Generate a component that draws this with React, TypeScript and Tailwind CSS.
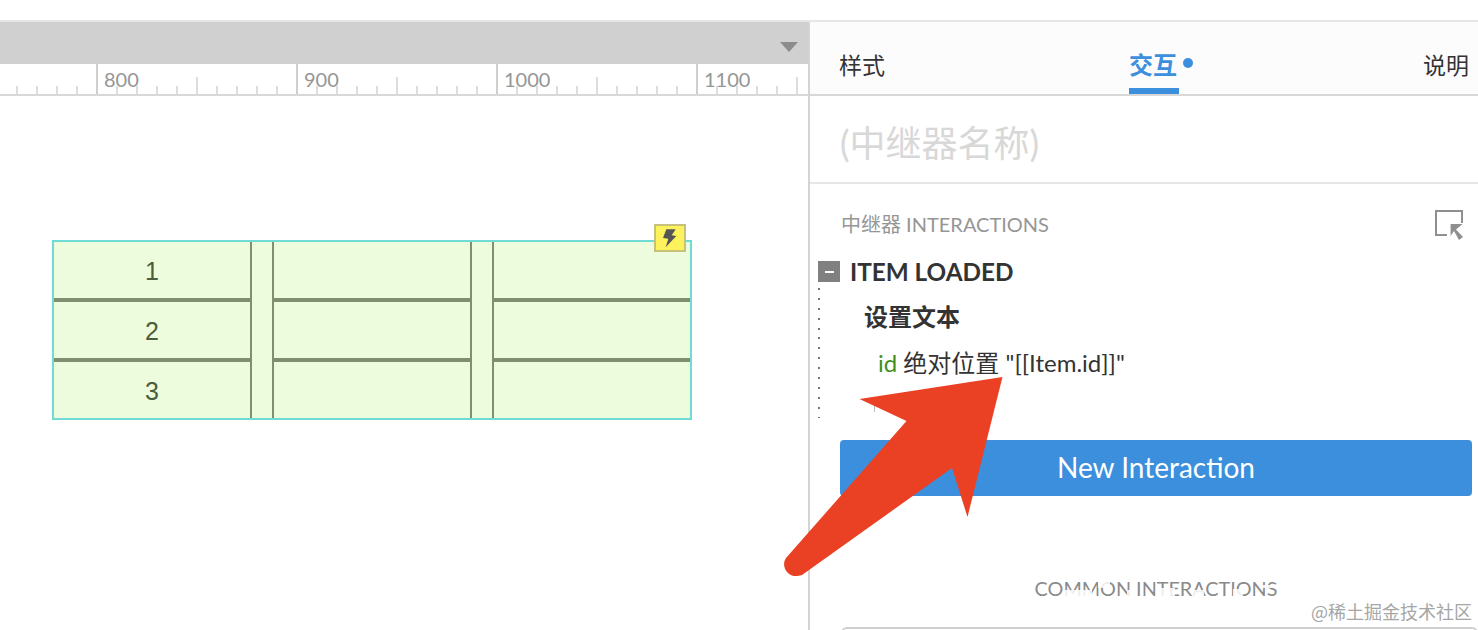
const latin = "font-['Lato','Noto_Sans_CJK_SC',sans-serif]";

const ticks = Array.from({ length: 40 }, (_, i) => 17 + i * 20);

// washed out patches over the "COMMON INTERACTIONS" caption
const patches = [
  "left-[1064px] top-[590px] h-[8px] w-[28px]",
  "left-[1098px] top-[580px] h-[8px] w-[12px]",
  "left-[1127px] top-[590px] h-[8px] w-[6px]",
  "left-[1161px] top-[588px] h-[10px] w-[14px]",
  "left-[1192px] top-[590px] h-[8px] w-[12px]",
  "left-[1233px] top-[589px] h-[9px] w-[10px]",
  "left-[1262px] top-[585px] h-[3px] w-[16px]",
];

function Ruler() {
  return (
    <div className="relative h-[32px] border-b-2 border-[#d8d8d8] bg-white">
      <svg className="absolute left-0 top-0" width="808" height="30" viewBox="0 0 808 30">
        {ticks.map((x) => {
          const major = (x - 97) % 200 === 0;
          const mid = (x - 197) % 200 === 0;
          return (
            <line key={x} x1={x} x2={x} y1={major ? 0 : mid ? 13 : 22} y2={30} stroke="#cfcfcf" strokeWidth={major ? 2 : 1.4} />
          );
        })}
      </svg>
      <div className="relative flex pl-[97px] pt-[2px]">
        {["800", "900", "1000", "1100"].map((n) => (
          <span key={n} className="w-[200px] shrink-0 pl-[7px] text-[20px] leading-[26px] text-[#969696]">
            {n}
          </span>
        ))}
      </div>
    </div>
  );
}

function Cells({ labels, className }: { labels?: string[]; className: string }) {
  const rows = labels ?? ["", "", ""];
  return (
    <div className={className}>
      {rows.map((t, i) => (
        <div
          key={i}
          className={`box-content flex h-[56px] items-center justify-center font-['Liberation_Sans',sans-serif] text-[25px] text-[#4b5d3d] ${i < 2 ? "border-b-4 border-[#7f8f6f]" : ""}`}
        >
          <span className="pt-[4px]">{t}</span>
        </div>
      ))}
    </div>
  );
}

function RepeaterTable() {
  return (
    <div className="relative flex h-[180px] w-[640px] border-2 border-[#70dad6] bg-[#ecfcdc]">
      <Cells labels={["1", "2", "3"]} className="w-[198px] border-r-2 border-[#7f8f6f]" />
      <div className="w-[20px]" />
      <Cells className="w-[200px] border-x-2 border-[#7f8f6f]" />
      <div className="w-[20px]" />
      <Cells className="w-[198px] border-l-2 border-[#7f8f6f]" />
      <div className="absolute right-[4px] top-[-18px] flex h-[28px] w-[32px] items-center justify-center border-2 border-[#c8c17c] bg-[#fdf25c]">
        <svg width="14" height="19" viewBox="0 0 14 19">
          <path d="M3.3.3h9.4L8.7 6.3l4.6.7L2.7 18.3 5.3 9.7 0 9Z" fill="#555" />
        </svg>
      </div>
    </div>
  );
}

function Arrow() {
  return (
    <svg className="pointer-events-none absolute left-0 top-0" width="1478" height="630" viewBox="0 0 1478 630">
      <path
        d="M1002.5 377 L859.5 399 L906.5 421 L786 558 C780 567 789 580 802 575 L952 468 L967.5 517 Z"
        fill="#ea4024"
      />
    </svg>
  );
}

export default function App() {
  return (
    <div className={`relative h-[630px] w-[1478px] overflow-hidden bg-white ${latin}`}>
      <div className="h-[22px] border-b-2 border-[#e6e6e6]" />
      <div className="flex h-[608px]">
        {/* canvas side */}
        <div className="w-[810px] border-r-2 border-[#d4d4d4]">
          <div className="flex h-[42px] items-end justify-end bg-[#d0d0d0] pb-[12px] pr-[10px]">
            <svg width="18" height="10" viewBox="0 0 18 10">
              <path d="M0 0h18l-9 10Z" fill="#8c8c8c" />
            </svg>
          </div>
          <Ruler />
          <div className="pl-[52px] pt-[144px]">
            <RepeaterTable />
          </div>
        </div>

        {/* inspector */}
        <div className="w-[668px]">
          <div className="flex h-[74px] justify-between border-b-2 border-[#d8d8d8] bg-[#fcfcfc] pl-[29px] pr-[9px] font-['Noto_Sans_CJK_SC',sans-serif] text-[23px]">
            <div className="pt-[25px] leading-[34px] text-[#333]">样式</div>
            <div className="relative w-[50px] border-b-[6px] border-[#3c8fdc] pt-[25px] text-[24px] font-bold leading-[34px] text-[#3c8fdc]">
              交互
              <span className="absolute left-[54px] top-[36px] h-[10px] w-[10px] rounded-full bg-[#3c8fdc]" />
            </div>
            <div className="pt-[25px] leading-[34px] text-[#333]">说明</div>
          </div>

          <div className="flex h-[88px] items-center border-b-2 border-[#e6e6e6] pl-[30px] pt-[8px] text-[36px] text-[#d8d8d8]">
            (中继器名称)
          </div>

          <div className="mt-[29px] flex h-[24px] items-center justify-between pl-[31px] pr-[13px]">
            <span className="pb-[2px] text-[20px] text-[#969696]">中继器 INTERACTIONS</span>
            <svg width="30" height="30" viewBox="0 0 30 30" fill="none">
              <path d="M12 25H1V1h26v12" stroke="#8f8f8f" strokeWidth="2" />
              <path d="M15.6 14h12L21 19.5l7 7.5-4 3-5-9-3.4 5Z" fill="#8f8f8f" />
            </svg>
          </div>

          <div className="ml-[8px] mt-[24px] flex h-[21px] items-center">
            <span className="flex h-[21px] w-[22px] items-center justify-center bg-[#808080]">
              <span className="h-[2px] w-[9px] bg-white" />
            </span>
            <span className="ml-[10px] pt-[2px] text-[24.3px] font-bold text-[#333]">ITEM LOADED</span>
          </div>

          <div className="ml-[8px] mt-[6px] flex h-[130px]">
            <div className="w-[2px] bg-[repeating-linear-gradient(to_bottom,#777_0_2px,transparent_2px_9.9px)]" />
            <div className="text-[#333]">
              <div className="ml-[44px] mt-[11px] h-[36px] text-[24px] font-bold leading-[36px]">设置文本</div>
              <div className="ml-[58px] mt-[10px] h-[36px] whitespace-pre text-[24px] leading-[36px]">
                <span className="text-[#3f8f1f]">id</span> 绝对位置 "[[Item.id]]"
              </div>
              <div className="ml-[54px] mt-[21px] h-[10px] w-[1px] bg-[#bbb]" />
            </div>
          </div>

          <div className="ml-[30px] mr-[6px] mt-[22px] flex h-[56px] items-center justify-center rounded-[4px] bg-[#3c8fdc] pb-[2px] text-[28px] text-white">
            New Interaction
          </div>

          <div className="ml-[30px] mr-[6px] mt-[79px] text-center text-[19.8px] leading-[26px] text-[#8a8a8a]">COMMON INTERACTIONS</div>

          <div className="ml-[31px] mt-[26px] h-[20px] rounded-t-[6px] border-2 border-[#cfcfcf]" />
        </div>
      </div>

      <Arrow />
      {patches.map((p) => (
        <span key={p} className={`absolute bg-white/85 ${p}`} />
      ))}
      <div className="absolute right-[6px] top-[600px] bg-white/60 font-['Noto_Sans_CJK_SC',sans-serif] text-[18px] leading-[22px] text-[#a6a6a6]">
        @稀土掘金技术社区
      </div>
    </div>
  );
}
